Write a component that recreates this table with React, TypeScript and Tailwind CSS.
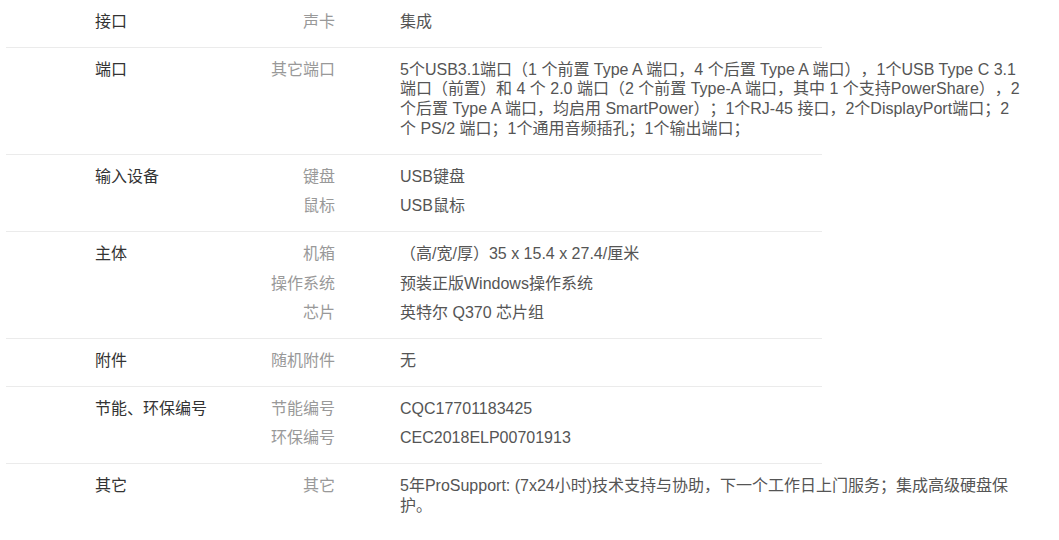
type SpecItem = { label: string; value: string };
type SpecGroup = { category: string; items: SpecItem[] };

const specs: SpecGroup[] = [
  { category: '接口', items: [{ label: '声卡', value: '集成' }] },
  {
    category: '端口',
    items: [
      {
        label: '其它端口',
        value:
          '5个USB3.1端口（1 个前置 Type A 端口，4 个后置 Type A 端口），1个USB Type C 3.1 端口（前置）和 4 个 2.0 端口（2 个前置 Type-A 端口，其中 1 个支持PowerShare），2 个后置 Type A 端口，均启用 SmartPower）；1个RJ-45 接口，2个DisplayPort端口；2 个 PS/2 端口；1个通用音频插孔；1个输出端口；',
      },
    ],
  },
  {
    category: '输入设备',
    items: [
      { label: '键盘', value: 'USB键盘' },
      { label: '鼠标', value: 'USB鼠标' },
    ],
  },
  {
    category: '主体',
    items: [
      { label: '机箱', value: '（高/宽/厚）35 x 15.4 x 27.4/厘米' },
      { label: '操作系统', value: '预装正版Windows操作系统' },
      { label: '芯片', value: '英特尔 Q370 芯片组' },
    ],
  },
  { category: '附件', items: [{ label: '随机附件', value: '无' }] },
  {
    category: '节能、环保编号',
    items: [
      { label: '节能编号', value: 'CQC17701183425' },
      { label: '环保编号', value: 'CEC2018ELP00701913' },
    ],
  },
  {
    category: '其它',
    items: [
      {
        label: '其它',
        value: '5年ProSupport: (7x24小时)技术支持与协助，下一个工作日上门服务；集成高级硬盘保护。',
      },
    ],
  },
];

export default function App() {
  return (
    <div className="min-h-[540px] bg-white font-['Liberation_Sans','Noto_Sans_CJK_SC',sans-serif] text-[16px] leading-[19.7px] [text-spacing-trim:space-all]">
      <div className="ml-[6px] w-[816px]">
        {specs.map((group, i) => (
          <div
            key={group.category}
            className={`flex pt-[12px] pb-[15px] ${i < specs.length - 1 ? 'border-b border-[#ebebeb]' : ''}`}
          >
            {/* Category */}
            <div className="w-[244px] shrink-0 pl-[89px] text-[#333]">{group.category}</div>

            {/* Label / value pairs */}
            <div className="flex flex-col gap-[10px]">
              {group.items.map((item) => (
                <div key={item.label} className="flex">
                  <div className="w-[85px] shrink-0 text-right text-[#999]">{item.label}</div>
                  <div className="ml-[65px] w-[625px] shrink-0 text-[#555]">{item.value}</div>
                </div>
              ))}
            </div>
          </div>
        ))}
      </div>
    </div>
  );
}
